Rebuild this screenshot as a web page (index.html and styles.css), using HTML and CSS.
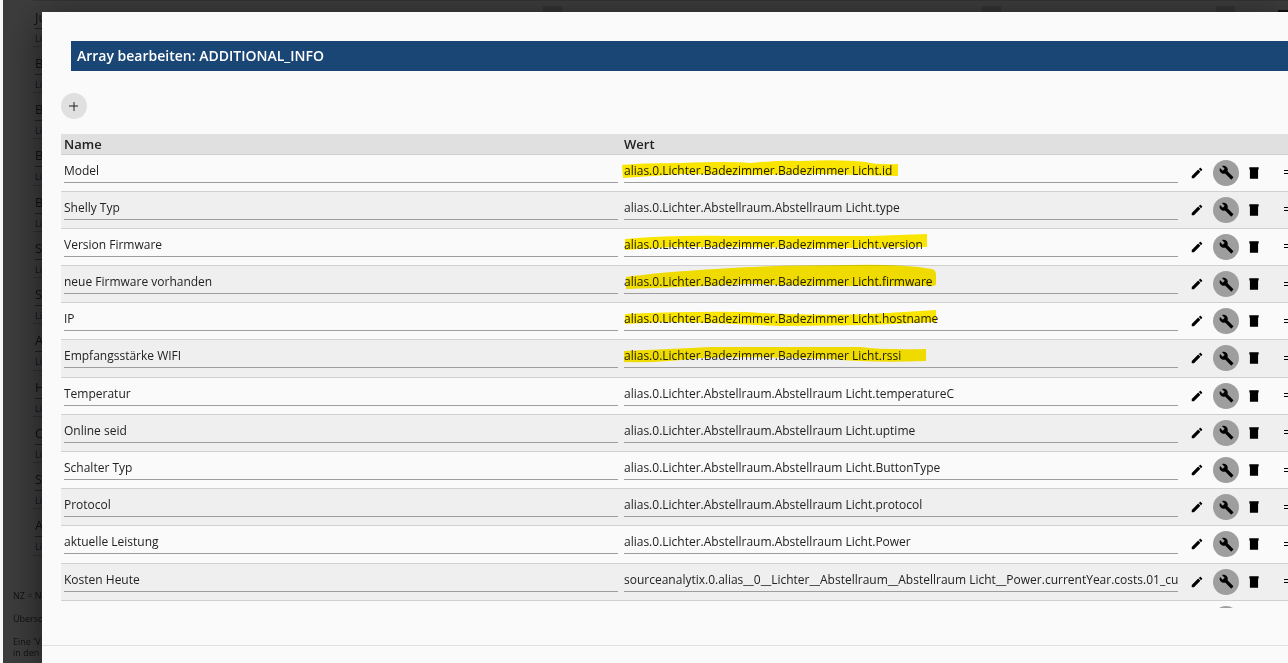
FILE: index.html
```html
<!DOCTYPE html>
<html lang="de">
<head>
<meta charset="utf-8">
<title>Array bearbeiten</title>
<link rel="stylesheet" href="styles.css">
</head>
<body>
<svg class="defs" width="0" height="0" aria-hidden="true">
  <symbol id="pencil" viewBox="0 0 24 24"><path d="M3 17.2V21h3.800L17.800 9.900l-3.800-3.800zM20.700 7c.4-.4.4-1 0-1.400l-2.300-2.300c-.4-.4-1-.4-1.400 0l-1.800 1.800 3.700 3.700z"/></symbol>
  <symbol id="wrench" viewBox="0 0 24 24"><path d="M22.700 19l-9.100-9.100c.9-2.300.4-5-1.500-6.900-2-2-5-2.400-7.400-1.300L9 6 6 9 1.600 4.700C.4 7.100.9 10.100 2.900 12.100c1.900 1.900 4.600 2.400 6.900 1.500l9.100 9.100c.4.4 1 .4 1.400 0l2.300-2.300c.5-.4.5-1.100.1-1.400z"/></symbol>
  <symbol id="trash" viewBox="0 0 24 24"><path d="M5 6h14v16H5zM4 2h16v4H4z"/></symbol>
</svg>
<div class="page" aria-hidden="true">
  <div class="topbar"><span class="tile"></span><span class="tile"></span><span class="tile"></span><span class="tool"></span></div>
  <div class="list" id="list"></div>
  <div class="notes"><p>NZ = N</p><p>Übersc</p><p>Eine 'V<br>in den</p></div>
</div>
<div class="dialog" role="dialog" aria-labelledby="title">
  <h1 class="title" id="title">Array bearbeiten: ADDITIONAL_INFO</h1>
  <button class="add" type="button" aria-label="+"><svg width="10" height="10" viewBox="0 0 10 10"><path d="M5 1v9M0 5h9"/></svg></button>
  <div class="scroll">
    <table class="grid">
      <colgroup><col><col><col class="actions-col"></colgroup>
      <thead><tr><th>Name</th><th>Wert</th><th></th></tr></thead>
      <tbody id="rows"></tbody>
    </table>
  </div>
  <div class="footer"></div>
</div>
<script src="app.js"></script>
</body>
</html>
```
FILE: styles.css
```css
* { box-sizing: border-box; }
body { margin: 0; height: 100vh; overflow: hidden; background: #fafafa; color: #222; font-family: "Open Sans", "Noto Sans", sans-serif; font-size: 12px; }
.defs { position: absolute; }
.page { height: 100vh; margin-left: 3px; background: #3d3d3d; color: #111; overflow: hidden; }
.topbar { display: grid; grid-template-columns: 440fr 234fr 42fr 30fr; height: 11px; margin-left: 30px; padding: 5px 0 0 510px; border-top: 1px solid #343434; }
.tile { width: 19px; height: 8px; background: #343434; }
.tool { width: 10px; height: 4px; margin-top: 4px; border: 2px solid #111; border-right: 0; border-bottom: 0; justify-self: end; }
.list { margin-left: 30px; }
.item { height: 46px; border-bottom: 1px solid #303030; padding-left: 2px; }
.item:nth-child(4n) { height: 47px; }
.item:first-child { height: 36px; }
.item strong { display: block; height: 18px; line-height: 12px; font-weight: 400; font-size: 13px; border-bottom: 1px solid #222; }
.item:not(:first-child) strong { height: 28px; line-height: 32px; }
.item span { display: block; font-size: 9px; line-height: 20px; color: #101426; }
.notes { margin: 34px 0 0 10px; font-size: 9px; line-height: 11px; }
.notes p { margin: 0 0 12px; }
.dialog { position: absolute; top: 12px; left: 42px; right: 0; bottom: 0; display: flex; flex-direction: column; background: #fafafa; box-shadow: 0 8px 36px rgba(0, 0, 0, .55); }
.title { margin: 29px 0 0 29px; padding: 0 6px; background: #1a4675; color: #fff; font-size: 14px; line-height: 30px; font-weight: 600; }
.add { width: 26px; height: 26px; margin: 22px 0 15px 19px; padding: 0; border: 0; border-radius: 50%; background: #e0e0e0; display: flex; align-items: center; justify-content: center; flex: none; }
.add path { stroke: #222; fill: none; }
.scroll { flex: 1; min-height: 0; margin-left: 19px; overflow: hidden; }
.grid { width: 100%; height: 504px; border-collapse: collapse; table-layout: fixed; }
.actions-col { width: 107px; }
th { height: 20px; padding: 0 3px; background: #e0e0e0; border-bottom: 1px solid #d0d0d0; text-align: left; font-size: 13px; line-height: 18px; font-weight: 600; }
td { height: 37px; padding: 0 3px; border-bottom: 1px solid #d0d0d0; position: relative; vertical-align: top; }
tbody tr:nth-child(even) { background: #efefef; }
.field { display: block; width: 100%; height: 28px; padding: 4px 0 0; border: 0; border-bottom: 1px solid #9e9e9e; border-radius: 0; background: transparent; color: #222; font: inherit; outline: 0; }
.marker { position: absolute; z-index: 1; left: 0; top: -1px; width: 320px; height: 32px; overflow: visible; fill: #ffea00; mix-blend-mode: multiply; pointer-events: none; }
.actions { display: flex; align-items: center; height: 36px; }
.icon { display: flex; align-items: center; justify-content: center; flex: none; width: 26px; height: 26px; padding: 0; border: 0; border-radius: 50%; background: transparent; }
.icon svg { width: 14px; height: 14px; }
.icon.edit { margin-right: 3px; }
.icon.pick { margin-right: 2px; background: #9e9e9e; }
.icon.pick svg { width: 15px; height: 15px; }
.icon.more { margin-left: 8px; }
.icon.more svg { width: 8px; height: 5px; }
.footer { flex: none; height: 18px; margin-top: 37px; border-top: 1px solid #e0e0e0; }
```
FILE: app.js
```javascript
const letters = ["Ju", "B", "B", "B", "B", "S", "S", "A", "H", "C", "S", "A"];
document.getElementById("list").innerHTML = letters
  .map(t => `<div class="item"><strong>${t}</strong><span>Li</span></div>`).join("");

const bath = "alias.0.Lichter.Badezimmer.Badezimmer Licht.";
const room = "alias.0.Lichter.Abstellraum.Abstellraum Licht.";
const rows = [
  ["Model", bath + "id", "M1 11Q20 9 60 9Q105 7 130 9Q160 6 180 7Q220 5 245 8Q255 11 277 10V22L200 20L130 21L60 20L2 24Z"],
  ["Shelly Typ", room + "type"],
  ["Version Firmware", bath + "version", "M4 11Q50 7 110 8H250L306 6V19L220 20L120 19L50 19L4 22Z"],
  ["neue Firmware vorhanden", bath + "firmware", "M5 12Q40 7 95 4Q150 0 230 0Q280-1 311 4Q315 5 315 10V19Q314 22 306 21Q180 21 130 19Q60 22 5 24Z"],
  ["IP", bath + "hostname", "M4 12Q70 9 125 10Q180 14 250 12L315 8V20L250 23L160 24L90 21L45 20L4 22Z"],
  ["Empfangsstärke WIFI", bath + "rssi", "M3 12Q50 10 90 8H240Q260 11 305 10V22Q250 24 210 20Q120 17 80 19Q40 24 3 23Z"],
  ["Temperatur", room + "temperatureC"],
  ["Online seid", room + "uptime"],
  ["Schalter Typ", room + "ButtonType"],
  ["Protocol", room + "protocol"],
  ["aktuelle Leistung", room + "Power"],
  ["Kosten Heute", "sourceanalytix.0.alias__0__Lichter__Abstellraum__Abstellraum Licht__Power.currentYear.costs.01_currentDay"],
  ["", ""]
];
const icon = id => `<svg aria-hidden="true"><use href="#${id}"/></svg>`;
document.getElementById("rows").innerHTML = rows.map(([name, value, mark]) => `<tr>
  <td><input class="field" aria-label="Name" value="${name}"></td>
  <td>${mark ? `<svg class="marker" aria-hidden="true"><path d="${mark}"/></svg>` : ""}<input class="field" aria-label="Wert" value="${value}"></td>
  <td><div class="actions">
    <button class="icon edit" type="button" aria-label="Bearbeiten">${icon("pencil")}</button>
    <button class="icon pick" type="button" aria-label="Konfigurieren">${icon("wrench")}</button>
    <button class="icon" type="button" aria-label="Löschen">${icon("trash")}</button>
    <button class="icon more" type="button" aria-label="Verschieben"><svg viewBox="0 0 8 5"><path d="M0 0h8v1H0zM0 3h8v1H0z"/></svg></button>
  </div></td></tr>`).join("");
```
